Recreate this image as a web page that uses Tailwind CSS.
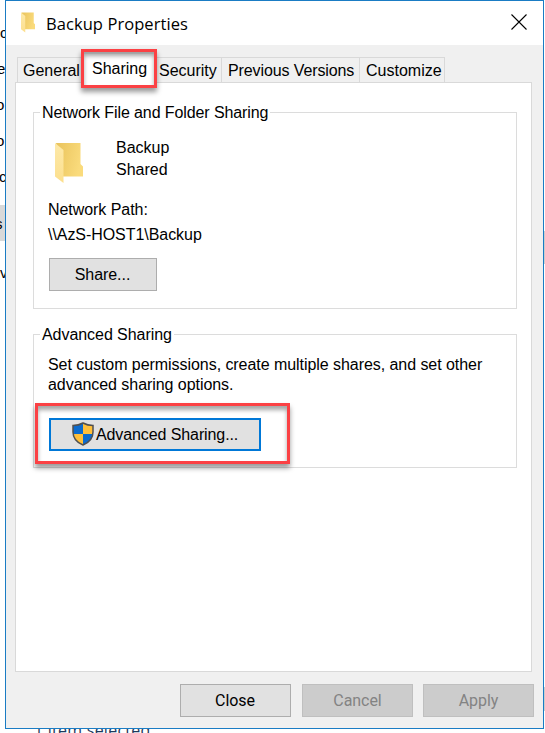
<!DOCTYPE html>
<html lang="en">
<head>
<meta charset="utf-8">
<title>Backup Properties</title>
<script src="https://cdn.jsdelivr.net/npm/@tailwindcss/browser@4"></script>
</head>
<body class="relative h-[733px] w-[545px] overflow-hidden bg-white font-['Liberation_Sans',Arial,sans-serif] text-[16px] tracking-[-0.055px] text-black">
  <svg width="0" height="0" class="absolute">
    <defs>
      <linearGradient id="back" x1="0" y1="0" x2="1" y2="0.3"><stop offset="0" stop-color="#e9c35c"/><stop offset="1" stop-color="#fadb7c"/></linearGradient>
      <linearGradient id="front" x1="0" y1="0" x2="0" y2="1"><stop offset="0" stop-color="#fde9a9"/><stop offset="1" stop-color="#fcdf8d"/></linearGradient>
      <symbol id="folder" viewBox="0 0 28 42">
        <path d="M1 1H25.500V22L28 24.500V34.500H8Z" fill="url(#back)"/>
        <path d="M0 1L8.500 8V41L0 34.500Z" fill="url(#front)"/>
      </symbol>
    </defs>
  </svg>

  <!-- Explorer window behind the dialog -->
  <div class="absolute left-0 top-0 h-[733px] w-[5px] overflow-hidden text-[15px] leading-[20px]">
    <span class="absolute left-0 top-[23px]">c</span>
    <span class="absolute -left-[3px] top-[59px]">e</span>
    <span class="absolute -left-[4px] top-[95px]">o</span>
    <span class="absolute -left-[4px] top-[131px]">o</span>
    <span class="absolute -left-[1px] top-[167px]">c</span>
    <div class="absolute left-0 top-[205px] h-[36px] w-[5px] bg-[#d9d9d9]"></div>
    <span class="absolute -left-[5px] top-[214px]">s</span>
    <span class="absolute left-0 top-[263px]">v</span>
  </div>
  <div class="absolute left-[34px] top-[720px] whitespace-nowrap font-['Open_Sans','Noto_Sans',sans-serif] text-[16px] leading-[20px] tracking-[0.25px] text-[#1e395b]">1 item selected</div>
  <div class="absolute left-[544px] top-[231px] h-[33px] w-px bg-[#cdcdcd]"></div>
  <div class="absolute left-[544px] top-[687px] h-[24px] w-px bg-[#cdcdcd]"></div>

  <main class="absolute left-[5px] top-0 flex h-[729px] w-[539px] flex-col border border-[#1a7cc4] bg-[#f0f0f0]">
    <header class="flex h-[44px] shrink-0 items-center bg-white pl-[15px] pr-[16px]">
      <svg class="-mt-[2px] h-[21px] w-[14px]"><use href="#folder"/></svg>
      <h1 class="ml-[11px] grow pt-[2px] font-['Open_Sans','Noto_Sans',sans-serif] text-[16.500px] leading-[22px] tracking-[0.07px]">Backup Properties</h1>
      <svg class="-mt-[2px] size-[16px]" viewBox="0 0 16 16" fill="none" stroke="#000" stroke-width="1.100"><path d="M.5 .5L15.500 15.500M15.500 .5L.5 15.500"/></svg>
    </header>

    <nav class="ml-[11px] mt-[9px] flex h-[28px] shrink-0 items-end text-[16px] tracking-normal">
      <div class="h-[25px] w-[65px] whitespace-nowrap border-l border-t border-[#d9d9d9] pl-[5px] leading-[25px]">General</div>
      <div class="z-10 h-[29px] w-[75px] self-start whitespace-nowrap bg-white pl-[10px] pt-[2px] leading-[25px]">Sharing</div>
      <div class="h-[25px] w-[65px] whitespace-nowrap border-r border-t border-[#d9d9d9] pl-[2px] leading-[25px]">Security</div>
      <div class="h-[25px] w-[138px] whitespace-nowrap border-r border-t border-[#d9d9d9] pl-[6px] leading-[25px] tracking-[-0.11px]">Previous Versions</div>
      <div class="h-[25px] w-[85px] whitespace-nowrap border-r border-t border-[#d9d9d9] pl-[6px] leading-[25px]">Customize</div>
    </nav>

    <section class="ml-[9px] h-[590px] w-[517px] shrink-0 border border-[#d9d9d9] bg-white pl-[17px] pt-[19px]">
      <fieldset class="h-[207px] w-[484px] border border-[#dcdcdc] pl-[6px]">
        <legend class="h-[20px] whitespace-nowrap px-[2px] leading-[22px] tracking-[-0.1px]">Network File and Folder Sharing</legend>
        <div class="pl-[8px]">
          <div class="flex pt-[15px]">
            <svg class="ml-[7px] mt-[5px] h-[42px] w-[28px]"><use href="#folder"/></svg>
            <div class="ml-[33px] leading-[22px] tracking-normal"><p>Backup</p><p>Shared</p></div>
          </div>
          <p class="mt-[13px] leading-[25px]">Network Path:</p>
          <p class="leading-[25px]">\\AzS-HOST1\Backup</p>
          <button class="ml-px mt-[11px] block h-[33px] w-[108px] border border-[#adadad] bg-[#e1e1e1] pr-px">Share...</button>
        </div>
      </fieldset>

      <fieldset class="mt-[15px] h-[144px] w-[484px] border border-[#dcdcdc] pl-[6px]">
        <legend class="h-[20px] px-[2px] leading-[22px]">Advanced Sharing</legend>
        <div class="pl-[8px] pt-[11px]">
          <p class="whitespace-nowrap leading-[20px]">Set custom permissions, create multiple shares, and set other<br>advanced sharing options.</p>
          <button class="ml-px mt-[23px] flex h-[33px] w-[212px] items-center whitespace-nowrap border-2 border-[#0078d7] bg-[#e1e1e1] pl-[21px]">
            <svg class="-mt-[2px] mr-[2px] h-[24px] w-[22px]" viewBox="0 0 22 24">
              <path d="M11 1Q6.500 3.500 1 3.500V12H11Z" fill="#0b6bce"/>
              <path d="M11 1Q15.500 3.500 21 3.500V12H11Z" fill="#ffc03a"/>
              <path d="M1 12H11V23Q1.500 18.500 1 12Z" fill="#ffc03a"/>
              <path d="M21 12H11V23Q20.500 18.500 21 12Z" fill="#0b6bce"/>
              <path d="M11 1Q6.500 3.500 1 3.500V10Q1 19 11 23Q21 19 21 10V3.500Q15.500 3.500 11 1Z" fill="none" stroke="#505050" stroke-width="1.500"/>
            </svg>
            <span class="tracking-[-0.1px]">Advanced Sharing...</span>
          </button>
        </div>
      </fieldset>
    </section>

    <footer class="flex gap-[11px] pl-[174px] pt-[12px] font-['Roboto','Liberation_Sans',sans-serif]">
      <button class="h-[33px] w-[111px] border border-[#adadad] bg-[#e1e1e1] pr-px">Close</button>
      <button class="h-[33px] w-[111px] border border-[#bfbfbf] bg-[#cccccc] text-[#838383]">Cancel</button>
      <button class="-ml-px h-[33px] w-[111px] border border-[#bfbfbf] bg-[#cccccc] text-[#838383]">Apply</button>
    </footer>
  </main>

  <!-- Highlight callouts -->
  <div class="absolute left-[81px] top-[49px] z-20 h-[39px] w-[76px] border-3 border-[#fb4144] shadow-[0_4px_5px_rgba(0,0,0,0.4),inset_0_4px_4px_rgba(0,0,0,0.35)]"></div>
  <div class="absolute left-[35px] top-[403px] z-20 h-[61px] w-[255px] border-3 border-[#fb4144] shadow-[0_4px_5px_rgba(0,0,0,0.4),inset_0_4px_4px_rgba(0,0,0,0.35)]"></div>
</body>
</html>
